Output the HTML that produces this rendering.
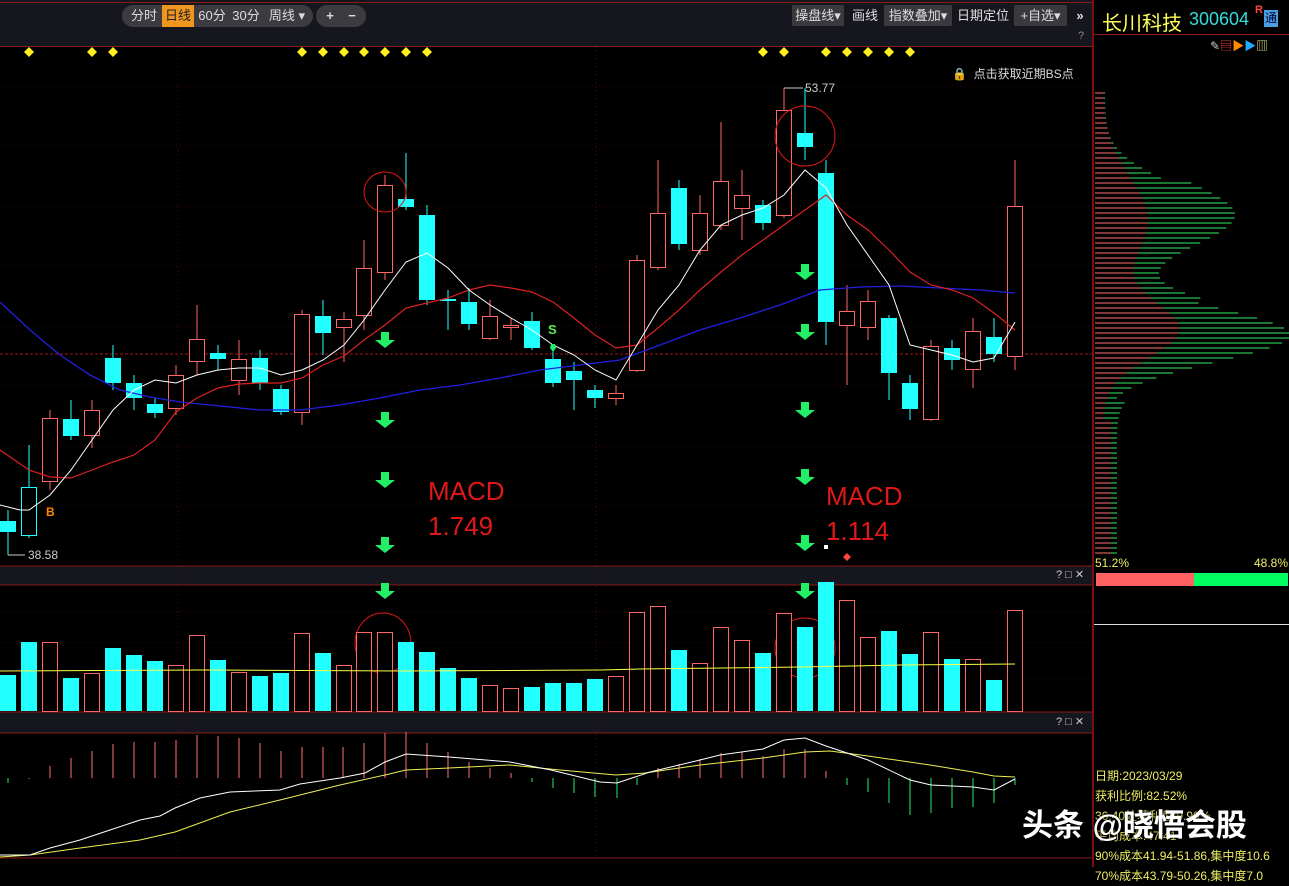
<!DOCTYPE html>
<html><head><meta charset="utf-8">
<style>
*{margin:0;padding:0;box-sizing:border-box}
body{width:1289px;height:867px;background:#000;overflow:hidden;position:relative;font-family:"Liberation Sans","Noto Sans CJK SC",sans-serif;color:#ddd}
.a{position:absolute;white-space:nowrap}
.bar{background:#16161e}
.btn{position:absolute;top:5px;height:21px;font-size:13px;line-height:21px;color:#ddd;text-align:center}
.gbg{background:#3a3a3e;border-radius:2px}
</style></head><body>
<div class="a bar" style="left:0;top:0;width:1092px;height:46px"></div>
<div class="a" style="left:0;top:2px;width:1092px;height:1px;background:#8b1a1a"></div>
<div class="a" style="left:0;top:46px;width:1092px;height:1px;background:#8b1a1a"></div>
<div class="a" style="left:122px;top:5px;width:191px;height:22px;background:#3c3c40;border-radius:11px"></div>
<div class="a" style="left:162px;top:5px;width:32px;height:22px;background:#f0961e"></div>
<div class="btn" style="left:128px;width:32px">分时</div>
<div class="btn" style="left:162px;width:32px;color:#222">日线</div>
<div class="btn" style="left:196px;width:32px">60分</div>
<div class="btn" style="left:230px;width:32px">30分</div>
<div class="btn" style="left:264px;width:46px">周线 ▾</div>
<div class="a" style="left:316px;top:5px;width:50px;height:22px;background:#3c3c40;border-radius:11px"></div>
<div class="btn" style="left:320px;width:20px;font-weight:bold">+</div>
<div class="btn" style="left:342px;width:20px;font-weight:bold">−</div>
<div class="btn gbg" style="left:792px;width:52px">操盘线▾</div>
<div class="btn" style="left:849px;width:32px">画线</div>
<div class="btn gbg" style="left:884px;width:68px">指数叠加▾</div>
<div class="btn" style="left:956px;width:54px">日期定位</div>
<div class="btn gbg" style="left:1014px;width:53px">+自选▾</div>
<div class="btn" style="left:1070px;width:20px;font-weight:bold">»</div>
<div class="a" style="left:1078px;top:30px;font-size:11px;color:#888">?</div>
<div class="a" style="left:952px;top:65px;font-size:12px;color:#ddd">🔒&nbsp; 点击获取近期BS点</div>

<!-- right panel -->
<div class="a" style="left:1092px;top:0;width:2px;height:867px;background:#7a1010"></div>
<div class="a" style="left:1094px;top:34px;width:195px;height:1px;background:#8b1a1a"></div>
<div class="a" style="left:1102px;top:7px;font-size:20px;color:#ffff55">长川科技</div>
<div class="a" style="left:1189px;top:9px;font-size:18px;color:#33dddd">300604</div>
<div class="a" style="left:1255px;top:4px;font-size:11px;color:#ff4444;font-weight:bold">R</div>
<div class="a" style="left:1264px;top:10px;width:14px;height:17px;background:#4aa0e0;font-size:12px;color:#003;line-height:17px;text-align:center">通</div>
<div class="a" style="left:1210px;top:37px;font-size:12px;color:#ccc">✎<span style="color:#e33">▤</span><span style="color:#f80">▶</span><span style="color:#2af">▶</span><span style="color:#ee8">▥</span></div>
<div class="a" style="left:1095px;top:556px;font-size:12px;color:#ee6">51.2%</div>
<div class="a" style="left:1254px;top:556px;font-size:12px;color:#ee6">48.8%</div>
<div class="a" style="left:1096px;top:573px;width:98px;height:13px;background:#ff6060"></div>
<div class="a" style="left:1194px;top:573px;width:94px;height:13px;background:#00ff60"></div>
<div class="a" style="left:1094px;top:624px;width:195px;height:1px;background:#ddd"></div>
<div class="a" style="left:1095px;top:766px;font-size:12px;line-height:20px;color:#ee6">日期:2023/03/29<br>获利比例:82.52%<br>36.40处获利盘:9.90%<br>平均成本:47.41<br>90%成本41.94-51.86,集中度10.6<br>70%成本43.79-50.26,集中度7.0</div>

<svg class="a" style="left:0;top:0" width="1289" height="867" id="s"></svg>

<div class="a" style="left:428px;top:474px;font-size:26px;color:#e01818;line-height:35px">MACD<br>1.749</div>
<div class="a" style="left:826px;top:479px;font-size:26px;color:#e01818;line-height:35px">MACD<br>1.114</div>
<div class="a" style="left:28px;top:548px;font-size:12px;color:#ccc">38.58</div>
<div class="a" style="left:805px;top:81px;font-size:12px;color:#ccc">53.77</div>
<div class="a" style="left:46px;top:505px;font-size:12px;color:#f80;font-weight:bold">B</div>
<div class="a" style="left:548px;top:322px;font-size:13px;color:#5e5;font-weight:bold">S</div>
<div class="a" style="left:1056px;top:568px;font-size:11px;color:#ccc">? □ ✕</div>
<div class="a" style="left:1056px;top:715px;font-size:11px;color:#ccc">? □ ✕</div>
<div class="a" style="left:1022px;top:800px;font-size:31px;color:#fff;font-weight:bold;text-shadow:0 0 3px #000">头条 @晓悟会股</div>

<script>
var S=document.getElementById('s'),h='';
function L(x1,y1,x2,y2,c,w,d){h+='<line x1="'+x1+'" y1="'+y1+'" x2="'+x2+'" y2="'+y2+'" stroke="'+c+'" stroke-width="'+(w||1)+'"'+(d?' stroke-dasharray="'+d+'"':'')+'/>';}
function R(x,y,w,hh,f,s){h+='<rect x="'+x+'" y="'+y+'" width="'+w+'" height="'+hh+'" fill="'+f+'"'+(s?' stroke="'+s+'"':'')+'/>';}
function P(pts,c,w){h+='<polyline fill="none" stroke="'+c+'" stroke-width="'+(w||1)+'" points="'+pts+'"/>';}
// bands
R(0,566,1092,19,'#16161e');R(0,712,1092,21,'#16161e');
L(0,566,1092,566,'#8b1a1a');L(0,585,1092,585,'#8b1a1a');L(0,712,1092,712,'#8b1a1a');L(0,733,1092,733,'#8b1a1a');L(0,858,1092,858,'#8b1a1a');
// grids
[86,145,206,266,326,386,446,506].forEach(function(y){L(0,y,1092,y,'#3a0a0a',1,'1 3')});
[178,596].forEach(function(x){L(x,47,x,858,'#4a0d0d',1,'1 3')});
[612,643,678].forEach(function(y){L(0,y,1092,y,'#3a0a0a',1,'1 3')});
L(0,354,1092,354,'#a01818',1,'3 2');
// diamonds
[29,92,113,302,323,344,364,385,406,427,763,784,826,847,868,889,910].forEach(function(x){h+='<polygon points="'+x+',47 '+(x+5)+',52 '+x+',57 '+(x-5)+',52" fill="#ffee22"/>'});
// candles: x,top,bot,high,low,type(r=red hollow,c=cyan fill,o=cyan outline)
var C=[[8,521,532,510,555,'c'],[29,487,535,445,538,'o'],[50,418,481,410,490,'r'],[71,419,436,400,440,'c'],[92,410,435,400,448,'r'],[113,358,383,345,390,'c'],[134,383,398,375,410,'c'],[155,404,413,398,418,'c'],[176,375,408,365,415,'r'],[197,339,361,305,375,'r'],[218,353,359,345,370,'c'],[239,359,380,340,395,'r'],[260,358,383,350,390,'c'],[281,389,412,385,415,'c'],[302,314,412,310,425,'r'],[323,316,333,300,355,'c'],[344,319,327,312,362,'r'],[364,268,315,240,330,'r'],[385,185,272,175,280,'r'],[406,199,207,153,210,'c'],[427,215,300,205,305,'c'],[448,299,301,290,330,'c'],[469,302,324,288,330,'c'],[490,316,338,300,340,'r'],[511,325,327,318,340,'r'],[532,321,348,312,350,'c'],[553,359,383,350,387,'c'],[574,371,380,362,410,'c'],[595,390,398,385,408,'c'],[616,393,398,385,405,'r'],[637,260,370,255,372,'r'],[658,213,267,160,270,'r'],[679,188,244,180,250,'c'],[700,213,250,195,255,'r'],[721,181,225,122,230,'r'],[742,195,208,170,240,'r'],[763,205,223,200,230,'c'],[784,110,215,88,218,'r'],[805,133,147,88,160,'c'],[826,173,322,160,345,'c'],[847,311,325,285,385,'r'],[868,301,327,290,340,'r'],[889,318,373,315,400,'c'],[910,383,409,375,420,'c'],[931,346,419,340,421,'r'],[952,348,360,340,370,'c'],[973,331,369,318,388,'r'],[994,337,354,318,362,'c'],[1015,206,356,160,370,'r']];
C.forEach(function(k){var x=k[0],c=k[5]=='r'?'#ff6666':'#22ffff';L(x,k[3],x,k[4],c);
 if(k[5]=='c')R(x-8,k[1],16,Math.max(2,k[2]-k[1]),'#22ffff');else R(x-7.5,k[1]+.5,15,Math.max(1,k[2]-k[1]),'#000',c);});
L(8,555,25,555,'#ccc');L(784,88,803,88,'#ccc');
// MAs
P('0,302 30,330 60,355 90,375 120,390 150,397 180,402 220,406 260,410 300,410 340,405 380,398 420,390 460,385 500,378 540,370 580,365 620,360 660,345 700,330 740,318 780,305 820,290 860,287 900,286 940,288 980,290 1015,293','#2020dd',1.3);
P('0,450 29,470 50,477 71,478 92,470 113,462 134,455 155,440 176,412 197,398 218,388 239,384 260,383 281,383 302,378 323,365 344,356 364,340 385,325 406,308 427,303 448,298 469,290 490,285 511,288 532,292 553,302 574,318 595,335 616,348 637,345 658,328 679,310 700,290 721,272 742,255 763,240 784,225 805,210 826,195 847,215 868,230 889,250 910,272 931,285 952,290 973,298 994,313 1015,330','#dd2020',1.2);
P('0,505 20,510 29,510 50,495 71,470 92,440 113,410 134,390 155,380 176,383 197,375 218,370 239,368 260,368 281,375 302,370 323,360 344,345 364,320 385,290 406,262 427,253 448,268 469,290 490,305 511,318 532,330 553,345 574,355 595,370 616,380 637,345 658,310 679,285 700,250 721,225 742,215 763,208 784,195 805,170 826,188 847,225 868,255 889,285 910,345 931,350 952,355 973,362 994,358 1015,322','#ffffff',1);
// arrows
function A(x,y){h+='<polygon points="'+(x-4)+','+(y-8)+' '+(x+4)+','+(y-8)+' '+(x+4)+','+y+' '+(x+10)+','+y+' '+x+','+(y+8)+' '+(x-10)+','+y+' '+(x-4)+','+y+'" fill="#22ee66"/>'};
[340,420,480,545,591].forEach(function(y){A(385,y)});[272,332,410,477,543,591].forEach(function(y){A(805,y)});
h+='<polygon points="551,344 555,344 556,348 553,352 550,348" fill="#22ee66"/>';
R(824,545,4,4,'#fff');h+='<polygon points="847,553 851,557 847,561 843,557" fill="#f44"/>';
// circles
h+='<ellipse cx="385" cy="192" rx="21" ry="20" fill="none" stroke="#e01818"/><ellipse cx="805" cy="136" rx="30" ry="30" fill="none" stroke="#e01818"/><ellipse cx="383" cy="643" rx="28" ry="30" fill="none" stroke="#e01818"/><ellipse cx="805" cy="648" rx="30" ry="30" fill="none" stroke="#e01818"/>';
// volume
var V=[675,642,642,678,673,648,655,661,665,635,660,672,676,673,633,653,665,632,632,642,652,668,678,685,688,687,683,683,679,676,612,606,650,663,627,640,653,613,627,582,600,637,631,654,632,659,659,680,610];
V.forEach(function(v,i){var k=C[i],x=k[0];if(k[5]=='r')R(x-7.5,v+.5,15,711-v,'#000','#ff6666');else R(x-8,v,16,711-v,'#22ffff');});
P('0,671 200,670 400,671 600,670 640,669 800,667 900,665 1015,664','#ffff44',1);
// macd hist
var M=[[8,783],[29,779],[50,766],[71,758],[92,751],[113,744],[134,742],[155,742],[176,740],[197,735],[218,736],[239,738],[260,743],[281,751],[302,747],[323,747],[343,747],[364,743],[385,733],[406,732],[427,743],[448,752],[469,762],[490,768],[511,773],[532,782],[553,788],[574,793],[595,797],[617,798],[637,785],[658,768],[679,764],[700,759],[721,753],[742,752],[763,756],[784,749],[805,749],[826,771],[847,785],[868,792],[889,803],[910,815],[931,813],[952,808],[973,807],[994,803],[1015,785]];
M.forEach(function(m){L(m[0],778,m[0],m[1],m[1]<778?'#ff7070':'#22ee66')});
P('0,857 30,855 80,848 140,840 175,832 230,812 280,800 340,785 385,775 406,770 449,768 510,765 560,770 616,775 645,773 700,765 763,758 805,752 830,751 868,756 930,765 973,772 994,776 1015,777','#eeee55',1);
P('0,855 30,855 50,848 80,840 110,830 140,820 160,816 175,808 200,798 230,792 280,790 300,784 340,778 365,773 385,762 406,754 449,757 510,762 551,770 600,782 617,783 650,772 700,760 720,755 763,749 784,740 805,738 826,746 868,760 910,780 931,785 973,787 994,790 1015,779','#ffffff',1);
// chips
for(var y=93;y<=555;y+=5){var t=(y-93)/462,Lg,Rd;
 function g(c,s,a){return a*Math.exp(-Math.pow((y-c)/s,2))}
 Lg=10+g(215,45,110)+g(335,38,185)+(y<300&&y>180?20:0)+(y>400?12:0);
 Rd=Math.min(Lg,8+g(220,60,45)+g(330,40,75)+(y>420?8:0));
 L(1095,y,1095+Rd,y,'#ff7070');if(Lg>Rd)L(1095+Rd,y,1095+Lg,y,'#33ee66');}
S.innerHTML=h;
</script>
</body></html>
